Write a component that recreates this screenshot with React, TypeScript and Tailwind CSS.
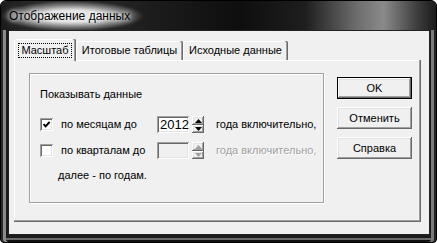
import React from "react";

const raised =
  "shadow-[inset_-1px_-1px_0_#696969,inset_1px_1px_0_#ffffff,inset_-2px_-2px_0_#a0a0a0,inset_2px_2px_0_#e3e3e3]";
const sunken =
  "shadow-[inset_1px_1px_0_#a0a0a0,inset_-1px_-1px_0_#ffffff,inset_2px_2px_0_#696969,inset_-2px_-2px_0_#e3e3e3]";

function Tri({ up, disabled }: { up: boolean; disabled?: boolean }) {
  return (
    <svg width="7" height="4" viewBox="0 0 7 4" className="block">
      <polygon
        points={up ? "3.5,0 7,4 0,4" : "0,0 7,0 3.5,4"}
        fill={disabled ? "#a0a0a0" : "#000"}
      />
    </svg>
  );
}

function Spinner({ disabled }: { disabled?: boolean }) {
  return (
    <div className="flex flex-col w-[12px] h-[17px]">
      <div className={`h-[9px] bg-[#f0f0f0] flex items-center justify-center ${raised}`}>
        <Tri up disabled={disabled} />
      </div>
      <div className={`h-[8px] bg-[#f0f0f0] flex items-center justify-center ${raised}`}>
        <Tri up={false} disabled={disabled} />
      </div>
    </div>
  );
}

function Check({ checked }: { checked?: boolean }) {
  return (
    <div className={`w-[13px] h-[13px] bg-white flex items-center justify-center ${sunken}`}>
      {checked && (
        <svg width="9" height="9" viewBox="0 0 9 9">
          <path d="M1.5 4.2 L3.6 6.4 L7.6 2" stroke="#000" strokeWidth="1.9" fill="none" />
        </svg>
      )}
    </div>
  );
}

function Row({
  label,
  checked,
  value,
  disabled,
}: {
  label: string;
  checked?: boolean;
  value: string;
  disabled?: boolean;
}) {
  return (
    <div className="flex items-center h-[17px]">
      <Check checked={checked} />
      <span className="ml-[8px] w-[96px] leading-[13px]">{label}</span>
      <div
        className={`w-[32px] h-[17px] flex items-center pl-[3px] text-[13px] leading-[13px] ${
          disabled ? "bg-[#f0f0f0]" : "bg-white"
        } ${sunken}`}
      >
        {value}
      </div>
      <div className="ml-[3px]">
        <Spinner disabled={disabled} />
      </div>
      <span
        className={`ml-[12px] leading-[13px] ${
          disabled ? "text-[#a0a0a0] [text-shadow:1px_1px_0_#ffffff]" : ""
        }`}
      >
        года включительно,
      </span>
    </div>
  );
}

function Btn({ children, def }: { children: React.ReactNode; def?: boolean }) {
  return (
    <div
      className={`w-[75px] h-[22px] bg-[#f0f0f0] flex items-center justify-center leading-[13px] ${raised} ${
        def ? "border border-black" : ""
      }`}
    >
      {children}
    </div>
  );
}

export default function App() {
  return (
    <div className="w-[437px] h-[243px] flex flex-col bg-[#1c1c1c] rounded-t-[6px] rounded-b-[4px] border border-black shadow-[inset_2px_0_0_#2a2a2a,inset_5px_0_0_#8a8a8a,inset_-2px_0_0_#222,inset_-5px_0_0_#7a7a7a,inset_0_-2px_0_#111,inset_0_-4px_0_#6a6a6a] font-['Liberation_Sans',Arial,sans-serif] text-[11px] text-black overflow-hidden">
      <div className="h-[29px] flex items-center bg-[linear-gradient(90deg,#1a1a1a_0%,#333_12%,#1c1c1c_35%,#0e0e0e_55%,#1e1e1e_70%,#6e6e6e_82%,#8a8a8a_88%,#3a3a3a_96%,#1a1a1a_100%)] rounded-t-[6px]">
        <span className="pl-[8px] pr-[14px] py-[8px] text-[12px] leading-[14px] text-black bg-[radial-gradient(ellipse_closest-side_at_center,rgba(235,235,235,0.95)_40%,rgba(190,190,190,0.55)_72%,rgba(150,150,150,0)_100%)] [text-shadow:0_0_4px_#fff,0_0_8px_#fff]">
          Отображение данных
        </span>
      </div>
      <div className="flex-1 flex pl-[7px] pr-[6px] pb-[7px]">
        <div className="flex-1 bg-[#f0f0f0] border border-[#222] flex flex-col pt-[8px] pl-[5px] pr-[8px] pb-[12px]">
          <div className="h-[21px] flex items-end">
            <div className="relative z-10 -mb-[1px] w-[62px] h-[22px] bg-[#f0f0f0] rounded-t-[2px] flex items-center justify-center shadow-[inset_-1px_0_0_#696969,inset_-2px_0_0_#a0a0a0,inset_1px_1px_0_#ffffff]">
              <span className="border border-dotted border-black px-[2px] leading-[13px]">Масштаб</span>
            </div>
            <div className="w-[107px] h-[19px] rounded-t-[2px] flex items-center justify-center shadow-[inset_-1px_0_0_#696969,inset_-2px_0_0_#a0a0a0,inset_1px_1px_0_#ffffff] leading-[13px]">
              Итоговые таблицы
            </div>
            <div className="w-[105px] h-[19px] rounded-t-[2px] flex items-center justify-center shadow-[inset_-1px_0_0_#696969,inset_-2px_0_0_#a0a0a0,inset_1px_1px_0_#ffffff] leading-[13px]">
              Исходные данные
            </div>
          </div>
          <div className="flex-1 flex items-start pl-[15px] pt-[13px] shadow-[inset_-1px_-1px_0_#696969,inset_-2px_-2px_0_#a0a0a0,inset_1px_1px_0_#ffffff]">
            <div className="w-[295px] h-[130px] border border-[#a0a0a0] shadow-[inset_1px_1px_0_#ffffff,1px_1px_0_#ffffff] flex flex-col pl-[10px] pt-[14px]">
              <div className="leading-[13px]">Показывать данные</div>
              <div className="mt-[15px]">
                <Row label="по месяцам до" checked value="2012" />
              </div>
              <div className="mt-[9px]">
                <Row label="по кварталам до" value="" disabled />
              </div>
              <div className="mt-[10px] pl-[18px] leading-[13px]">далее - по годам.</div>
            </div>
            <div className="ml-[13px] mt-[4px] flex flex-col gap-[8px]">
              <Btn def>OK</Btn>
              <Btn>Отменить</Btn>
              <Btn>Справка</Btn>
            </div>
          </div>
        </div>
      </div>
    </div>
  );
}
